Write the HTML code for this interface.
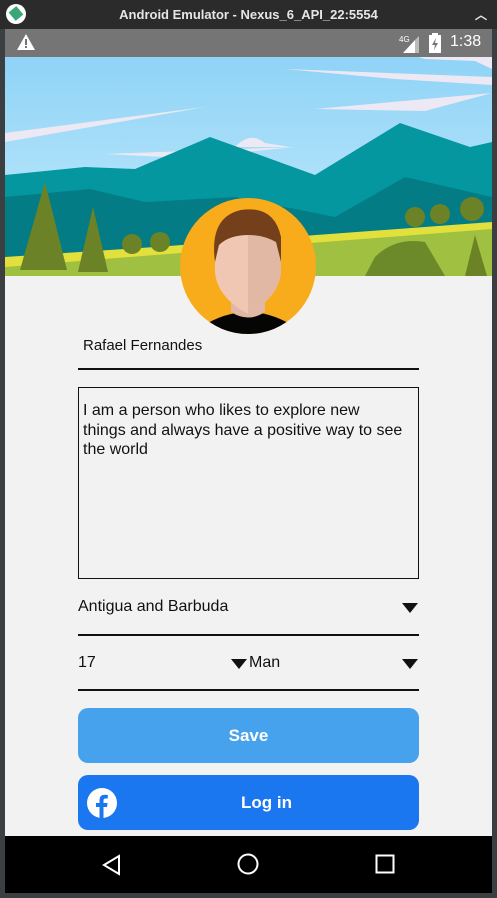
<!DOCTYPE html>
<html><head><meta charset="utf-8"><style>
*{margin:0;padding:0;box-sizing:border-box}
body{width:497px;height:898px;background:#3c3f41;font-family:"Liberation Sans",sans-serif;position:relative;overflow:hidden}
.title{position:absolute;left:0;top:0;width:497px;height:29px;background:#2b2b2b;color:#e6e6e6;font-weight:bold;font-size:13px;text-align:center;line-height:30px}
.status{position:absolute;left:5px;top:29px;width:487px;height:28px;background:#757575;color:#fff}
.screen{position:absolute;left:5px;top:57px;width:487px;height:779px;background:#f2f2f2;overflow:hidden}
.nav{position:absolute;left:5px;top:836px;width:487px;height:57px;background:#000}
.t{position:absolute;color:#111;font-size:16px}
.line{position:absolute;left:73px;width:341px;height:1.5px;background:#111}
.tri{position:absolute;width:0;height:0;border-left:8px solid transparent;border-right:8px solid transparent;border-top:10px solid #111}
.btn{position:absolute;left:73px;width:341px;height:55px;border-radius:10px;color:#fff;font-weight:bold;font-size:17px;text-align:center;line-height:55px}
</style></head><body>
<div class="title">Android Emulator - Nexus_6_API_22:5554
<div style="position:absolute;left:6px;top:4px;width:20px;height:20px;border-radius:50%;background:#fff"><div style="position:absolute;left:5px;top:4px;width:10px;height:11px;background:#3aa67a;transform:rotate(-40deg)"></div></div>
<div style="position:absolute;right:10px;top:0;font-size:12px">︿</div></div>
<div class="status">
<svg style="position:absolute;left:12px;top:5px" width="18" height="16"><path d="M9 0L18 16H0Z" fill="#fff"/><rect x="8" y="5" width="2" height="6" fill="#757575"/><rect x="8" y="12" width="2" height="2" fill="#757575"/></svg>
<svg style="position:absolute;left:394px;top:4px" width="24" height="20"><text x="0" y="9" font-size="8" fill="#fff" font-family="Liberation Sans">4G</text><path d="M4 20L16 7V20Z" fill="#fff"/><path d="M16 7L20 3V20H16Z" fill="#bbb"/></svg>
<svg style="position:absolute;left:424px;top:4px" width="12" height="20"><rect x="0" y="2" width="12" height="18" fill="#fff"/><rect x="3" y="0" width="6" height="3" fill="#fff"/><path d="M7 5L3 12H6L5 17L9 10H6Z" fill="#757575"/></svg>
<div style="position:absolute;left:445px;top:4px;font-size:16px">1:38</div>
</div>
<div class="screen">
<svg width="487" height="219" style="position:absolute;left:0;top:0">
<defs><linearGradient id="sky" x1="0" y1="0" x2="0" y2="1"><stop offset="0" stop-color="#8fd3f7"/><stop offset="1" stop-color="#c6ecfb"/></linearGradient></defs>
<rect width="487" height="219" fill="url(#sky)"/>
<path d="M280 12L487 20V28L390 22Z" fill="#ece9f4"/>
<path d="M380 0Q390 -8 420 2L470 4L487 12V0Z" fill="#ece9f4"/>
<path d="M0 76L200 50L0 85Z" fill="#ece9f4"/>
<path d="M310 52L487 36L420 54Z" fill="#ece9f4"/>
<path d="M100 97L290 90L180 101Z" fill="#ece9f4"/>
<path d="M230 90Q245 74 260 86L285 90Z" fill="#ece9f4"/>
<path d="M0 118L80 110L130 112L205 80L310 118L395 66L465 90L487 85V219H0Z" fill="#05979f"/>
<path d="M0 140L85 132L140 145L230 140L330 160L400 120L487 140V219H0Z" fill="#037c85"/>
<path d="M0 200L150 190L487 165V219H0Z" fill="#e2e03c"/>
<path d="M0 210L150 198L487 172V219H0Z" fill="#9fc040"/>
<path d="M370 200Q390 180 420 185L440 219H360Z" fill="#6c8a2a"/>
<path d="M40 125L62 213H15Z" fill="#6b8226"/>
<path d="M88 150L103 215H73Z" fill="#6b8226"/>
<path d="M470 178L482 219H460Z" fill="#6b8226"/>
<circle cx="127" cy="187" r="10" fill="#6b8226"/><circle cx="155" cy="185" r="10" fill="#6b8226"/>
<circle cx="410" cy="160" r="10" fill="#6b8226"/><circle cx="435" cy="157" r="10" fill="#6b8226"/><circle cx="467" cy="152" r="12" fill="#6b8226"/>
</svg>
<svg width="140" height="140" style="position:absolute;left:174px;top:140px">
<defs><clipPath id="c"><circle cx="69" cy="69" r="68"/></clipPath></defs>
<circle cx="69" cy="69" r="68" fill="#f8ac1b"/>
<g clip-path="url(#c)">
<path d="M22 130Q69 100 116 130V140H22Z" fill="#050505"/>
<path d="M52 90H86V115Q69 126 52 115Z" fill="#e0b8a3"/>
<path d="M36 50Q36 20 69 18Q102 20 102 50V75Q100 100 69 117Q38 100 36 75Z" fill="#f0c7b2"/>
<path d="M69 18Q102 20 102 50V75Q100 100 69 117Z" fill="#e0b8a3"/>
<path d="M36 65Q30 20 62 13Q95 8 102 40V65L97 45Q85 38 70 38Q50 38 40 48Z" fill="#73401b"/>
</g></svg>
<div class="t" style="left:78px;top:280px;font-size:15px">Rafael Fernandes</div>
<div class="line" style="top:311px"></div>
<div style="position:absolute;left:73px;top:330px;width:341px;height:192px;border:1.5px solid #111"></div>
<div class="t" style="left:78px;top:344px;font-size:16px;line-height:19.5px;white-space:nowrap">I am a person who likes to explore new<br>things and always have a positive way to see<br>the world</div>
<div class="t" style="left:73px;top:541px">Antigua and Barbuda</div>
<div class="tri" style="left:397px;top:546px"></div>
<div class="line" style="top:577px"></div>
<div class="t" style="left:73px;top:597px">17</div>
<div class="tri" style="left:226px;top:602px"></div>
<div class="t" style="left:244px;top:597px">Man</div>
<div class="tri" style="left:397px;top:602px"></div>
<div class="line" style="top:632px"></div>
<div class="btn" style="top:651px;background:#47a2ee">Save</div>
<div class="btn" style="top:718px;background:#1a77f0"><span style="position:relative;left:18px">Log in</span>
<svg style="position:absolute;left:9px;top:13px" width="30" height="30" viewBox="0 0 30 30"><circle cx="15" cy="15" r="15" fill="#fff"/><path d="M16.5 30V19H20L20.6 15H16.5V12.5Q16.5 10.5 18.5 10.5H20.8V7Q19 6.7 17.5 6.7Q12.5 6.7 12.5 12V15H9V19H12.5V30Z" fill="#1a77f0"/></svg></div>
</div>
<div class="nav">
<svg style="position:absolute;left:97px;top:18px" width="20" height="22"><path d="M17 2V20L2 11Z" fill="none" stroke="#fff" stroke-width="2"/></svg>
<svg style="position:absolute;left:232px;top:17px" width="22" height="22"><circle cx="11" cy="11" r="9.5" fill="none" stroke="#fff" stroke-width="2"/></svg>
<svg style="position:absolute;left:370px;top:18px" width="20" height="20"><rect x="1.5" y="1.5" width="17" height="17" fill="none" stroke="#fff" stroke-width="2"/></svg>
</div>
</body></html>
